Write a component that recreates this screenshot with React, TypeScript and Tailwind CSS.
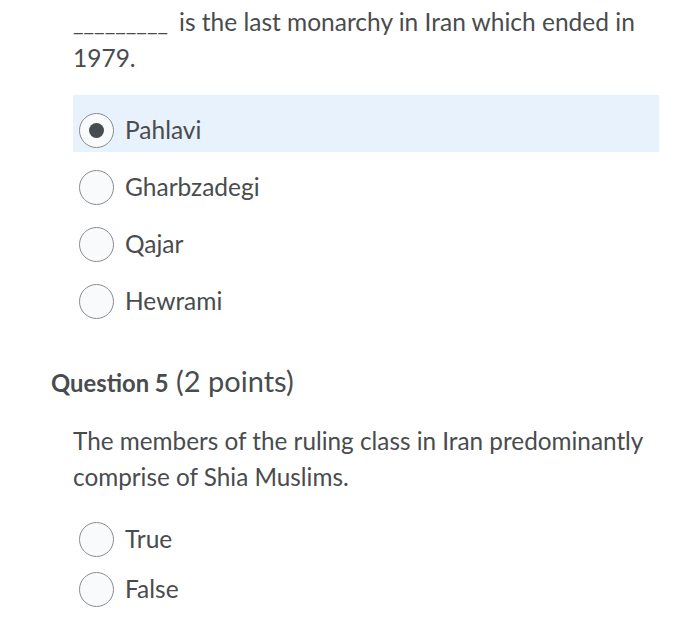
import React from "react"

const font = { fontFamily: "Lato, 'Noto Sans', sans-serif" }

function Radio({ checked }: { checked?: boolean }) {
  return (
    <span className="flex h-[35px] w-[35px] shrink-0 items-center justify-center rounded-full border-[1.5px] border-[#8a8c8e] bg-[#f9fafc]">
      {checked && <span className="h-[15px] w-[15px] rounded-full bg-[#494c4e]" />}
    </span>
  )
}

function Option({ label, checked }: { label: string; checked?: boolean }) {
  return (
    <div className={`flex h-[57px] items-center gap-[11px] pl-[6px] pt-[14px] ${checked ? "bg-[#e8f2fc]" : ""}`}>
      <Radio checked={checked} />
      <span className="text-[24.5px] text-[#494c4e]">{label}</span>
    </div>
  )
}

export default function App() {
  return (
    <div className="h-[640px] w-[700px] bg-white text-[#494c4e]" style={font}>
      <div className="pl-[73px] pr-[40px] pt-[4px]">
        <p className="text-[24.5px] leading-[36px]">
          <span className="mr-[11px] inline-block text-[23px] leading-[30px]">_________</span>
          <span>is the last monarchy in Iran which ended in</span> <span>1979.</span>
        </p>
        <div className="mt-[19px] w-[586px]">
          <Option label="Pahlavi" checked />
          <Option label="Gharbzadegi" />
          <Option label="Qajar" />
          <Option label="Hewrami" />
        </div>
      </div>
      <div className="pl-[51px] pt-[42px]">
        <h2 className="text-[29px] leading-[32px]">
          <span className="text-[23.8px] font-bold">Question 5</span> (2 points)
        </h2>
      </div>
      <div className="pl-[73px] pr-[40px] pt-[24px]">
        <p className="text-[24.3px] leading-[36px]">
          The members of the ruling class in Iran predominantly comprise of Shia Muslims.
        </p>
        <div className="mt-[26px] flex flex-col gap-[13px]">
          <div className="flex items-center gap-[11px] pl-[6px]">
            <Radio />
            <span className="text-[24.5px]">True</span>
          </div>
          <div className="flex items-center gap-[11px] pl-[6px]">
            <Radio />
            <span className="text-[24.5px]">False</span>
          </div>
        </div>
      </div>
    </div>
  )
}
